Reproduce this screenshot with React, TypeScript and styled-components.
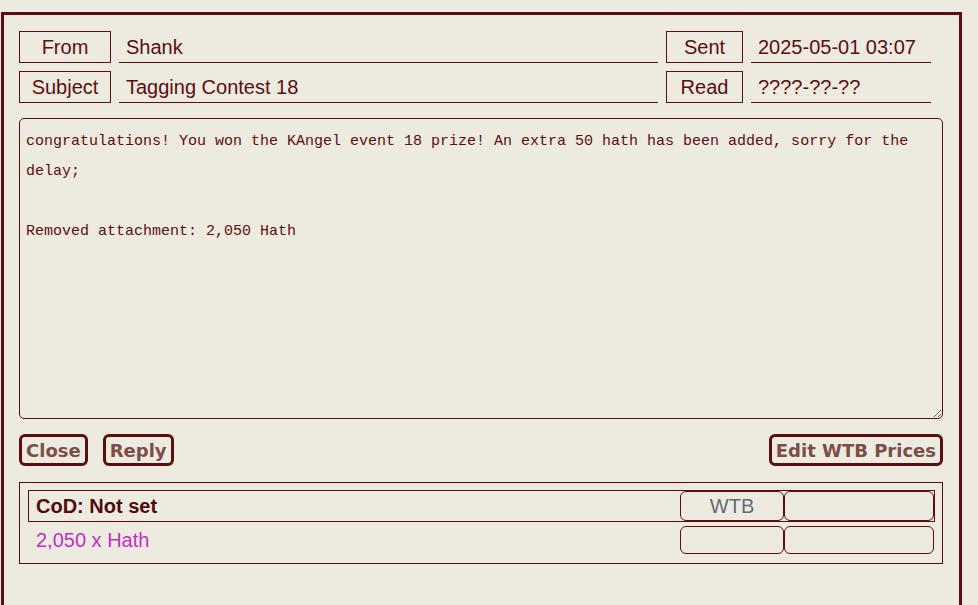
import React from "react";
import styled, { createGlobalStyle } from "styled-components";

const ink = "#5c0d11";
const paper = "#edebdf";

const GlobalStyle = createGlobalStyle`
  html, body {
    margin: 0;
    padding: 0;
    background: ${paper};
    overflow: hidden;
  }
`;

const Page = styled.div`
  padding: 12px 0 0 1px;
  height: 605px;
  box-sizing: border-box;
`;

const Panel = styled.div`
  width: 961px;
  height: 620px;
  box-sizing: border-box;
  border: 3px solid ${ink};
  padding: 16px 15px 0 15px;
  font-family: "Liberation Sans", Arial, sans-serif;
  color: ${ink};
`;

const Header = styled.div`
  display: grid;
  grid-template-columns: 92px 539px 77px 180px;
  column-gap: 8px;
  row-gap: 8px;
`;

const Label = styled.div`
  height: 32px;
  box-sizing: border-box;
  border: 1px solid ${ink};
  display: flex;
  align-items: center;
  justify-content: center;
  font-size: 20px;
`;

const Field = styled.div`
  height: 32px;
  box-sizing: border-box;
  border-bottom: 1px solid ${ink};
  display: flex;
  align-items: center;
  padding: 2px 0 0 7px;
  font-size: 20px;
`;

const Body = styled.textarea`
  display: block;
  margin-top: 15px;
  width: 924px;
  height: 301px;
  box-sizing: border-box;
  border: 1px solid ${ink};
  border-radius: 5px;
  background: ${paper};
  color: ${ink};
  padding: 8px 6px 4px 6px;
  font-family: "Liberation Mono", "Courier New", monospace;
  font-size: 15px;
  line-height: 30px;
  outline: none;
`;

const ButtonRow = styled.div`
  display: flex;
  align-items: center;
  gap: 15px;
  margin-top: 15px;
  width: 924px;
`;

const Button = styled.button<{ $push?: boolean }>`
  height: 32px;
  box-sizing: border-box;
  border: 3px solid ${ink};
  border-radius: 6px;
  background: ${paper};
  color: #7e4d47;
  font-family: "DejaVu Sans", Verdana, sans-serif;
  font-weight: bold;
  font-size: 18px;
  padding: 0 4px;
  margin-left: ${(p) => (p.$push ? "auto" : "0")};
`;

const Attach = styled.div`
  margin-top: 16px;
  width: 924px;
  box-sizing: border-box;
  border: 1px solid ${ink};
  padding: 7px 7px 8px 8px;
  display: flex;
  flex-direction: column;
  gap: 3px;
`;

const ItemRow = styled.div<{ $head?: boolean }>`
  display: grid;
  grid-template-columns: 1fr 104px 150px;
  height: ${(p) => (p.$head ? "32px" : "30px")};
  box-sizing: border-box;
  border: 1px solid ${(p) => (p.$head ? ink : "transparent")};
`;

const ItemName = styled.div<{ $head?: boolean }>`
  display: flex;
  align-items: center;
  padding-left: 7px;
  font-size: 20px;
  font-weight: ${(p) => (p.$head ? "bold" : "normal")};
  color: ${(p) => (p.$head ? "#4f0a0e" : "#c22fc8")};
`;

const Cell = styled.div`
  box-sizing: border-box;
  border: 1px solid ${ink};
  border-radius: 6px;
  display: flex;
  align-items: center;
  justify-content: center;
  font-size: 20px;
  color: #5f6b7c;
`;

export default function App() {
  return (
    <Page>
      <GlobalStyle />
      <Panel>
        <Header>
          <Label>From</Label>
          <Field>Shank</Field>
          <Label>Sent</Label>
          <Field>2025-05-01 03:07</Field>
          <Label>Subject</Label>
          <Field>Tagging Contest 18</Field>
          <Label>Read</Label>
          <Field>????-??-??</Field>
        </Header>
        <Body
          readOnly
          defaultValue={
            "congratulations! You won the KAngel event 18 prize! An extra 50 hath has been added, sorry for the delay;\n\nRemoved attachment: 2,050 Hath"
          }
        />
        <ButtonRow>
          <Button>Close</Button>
          <Button>Reply</Button>
          <Button $push>Edit WTB Prices</Button>
        </ButtonRow>
        <Attach>
          <ItemRow $head>
            <ItemName $head>CoD: Not set</ItemName>
            <Cell>WTB</Cell>
            <Cell />
          </ItemRow>
          <ItemRow>
            <ItemName>2,050 x Hath</ItemName>
            <Cell />
            <Cell />
          </ItemRow>
        </Attach>
      </Panel>
    </Page>
  );
}
